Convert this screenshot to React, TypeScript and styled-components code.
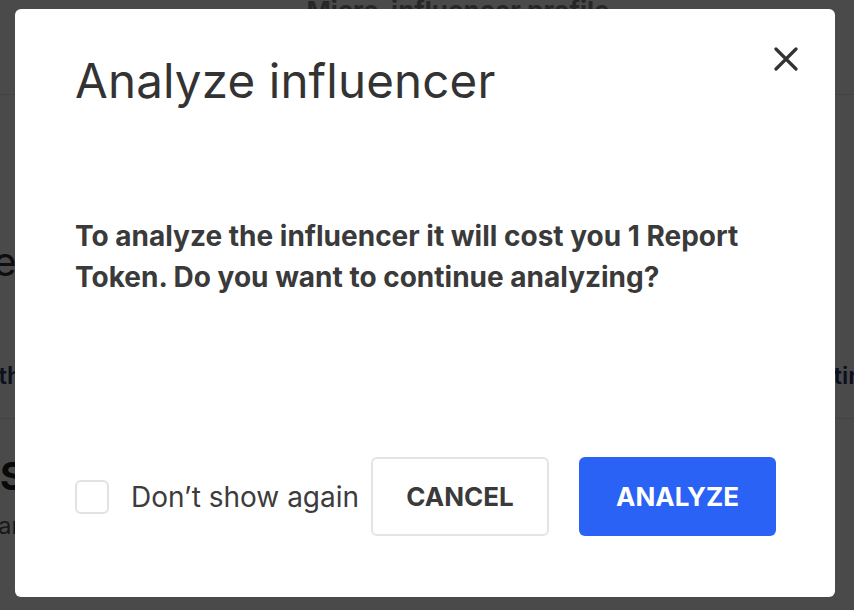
import * as React from "react";
import { useState } from "react";
import styled, { createGlobalStyle } from "styled-components";

const GlobalStyle = createGlobalStyle`
  html, body {
    margin: 0;
    padding: 0;
    height: 100%;
    overflow: hidden;
  }
  body {
    font-family: Inter, "Noto Sans", "Liberation Sans", sans-serif;
    background: #ffffff;
  }
`;

/* page that sits behind the dialog */
const Page = styled.div`
  width: 854px;
  height: 610px;
  overflow: hidden;
  background: #ffffff;
`;

const PageInner = styled.div`
  width: 1040px;
  margin-left: -162px;
  display: flex;
  flex-direction: column;
`;

const TopBar = styled.div`
  height: 100px;
  box-sizing: border-box;
  display: flex;
  justify-content: center;
  padding-left: 200px;
  border-bottom: 1px solid #e6e6e6;
  margin-top: -5px;
  font-size: 26px;
  font-weight: 700;
  color: #888;
`;

const SectionTitle = styled.h2`
  margin: 142px 0 0;
  font-size: 40px;
  font-weight: 400;
  color: #333;
`;

const Tabs = styled.div`
  display: flex;
  justify-content: space-between;
  padding: 0 0 28px 14px;
  margin-top: 75px;
  font-size: 24px;
  font-weight: 600;
  color: #2d3a70;
  border-bottom: 1px solid #e4e4e4;
`;

const BigHeading = styled.h3`
  margin: 34px 0 0;
  padding-left: 162px;
  font-size: 38px;
  font-weight: 700;
  color: #222;
`;

const SubLine = styled.p`
  margin: 12px 0 0;
  padding-left: 160px;
  font-size: 24px;
  color: #555;
`;

const Overlay = styled.div`
  position: fixed;
  inset: 0;
  background: rgba(0, 0, 0, 0.71);
  display: flex;
  align-items: flex-start;
  justify-content: flex-start;
  padding: 9px 0 0 15px;
`;

const Dialog = styled.div`
  position: relative;
  width: 820px;
  height: 588px;
  box-sizing: border-box;
  background: #ffffff;
  border-radius: 6px;
  padding: 44px 60px 61px 60px;
  display: flex;
  flex-direction: column;
`;

const Title = styled.h1`
  margin: 0;
  font-size: 47.5px;
  line-height: 56px;
  font-weight: 400;
  color: #333333;
  letter-spacing: 0.15px;
`;

const CloseButton = styled.button`
  position: absolute;
  top: 36px;
  right: 35px;
  width: 28px;
  height: 28px;
  padding: 0;
  border: none;
  background: transparent;
  display: flex;
  align-items: center;
  justify-content: center;
  cursor: pointer;
`;

const Message = styled.p`
  margin: 107px 0 0;
  font-size: 28px;
  line-height: 41px;
  font-weight: 700;
  color: #3a3a3a;
  letter-spacing: 0;
`;

const Footer = styled.div`
  margin-top: auto;
  display: flex;
  align-items: center;
`;

const CheckLabel = styled.label`
  display: flex;
  align-items: center;
  gap: 22px;
  font-size: 28px;
  color: #3c3c3c;
  white-space: nowrap;
  cursor: pointer;
  margin-right: 12px;
`;

const Box = styled.span<{ checked: boolean }>`
  flex: none;
  width: 34px;
  height: 34px;
  box-sizing: border-box;
  border: 2px solid #e2e2e2;
  border-radius: 6px;
  background: ${(p) => (p.checked ? "#2a62f6" : "#ffffff")};
`;

const Button = styled.button<{ primary?: boolean }>`
  flex: none;
  height: 79px;
  box-sizing: border-box;
  padding: 0 30px;
  border-radius: 6px;
  font-family: inherit;
  font-size: 26px;
  font-weight: 700;
  text-transform: uppercase;
  cursor: pointer;
  border: ${(p) => (p.primary ? "none" : "2px solid #e4e4e4")};
  background: ${(p) => (p.primary ? "#2a62f6" : "#ffffff")};
  color: ${(p) => (p.primary ? "#ffffff" : "#3a3a3a")};
  width: ${(p) => (p.primary ? "197px" : "178px")};
  margin-left: ${(p) => (p.primary ? "30px" : "auto")};
`;

export default function App() {
  const [dontShow, setDontShow] = useState(false);

  return (
    <>
      <GlobalStyle />
      <Page>
        <PageInner>
          <TopBar>Micro-influencer profile</TopBar>
          <SectionTitle>Audience</SectionTitle>
          <Tabs>
            <span>Overview of the audience</span>
            <span>Engagement listing</span>
          </Tabs>
          <BigHeading>Summary of the analysis</BigHeading>
          <SubLine>analysis is based on recent posts</SubLine>
        </PageInner>
      </Page>

      <Overlay>
        <Dialog>
          <CloseButton aria-label="Close">
            <svg width="24" height="24" viewBox="0 0 24 24">
              <path
                d="M2 2 L22 22 M22 2 L2 22"
                stroke="#333"
                strokeWidth="3.2"
                strokeLinecap="round"
              />
            </svg>
          </CloseButton>
          <Title>Analyze influencer</Title>
          <Message>
            To analyze the influencer it will cost you 1 Report Token. Do you
            want to continue analyzing?
          </Message>
          <Footer>
            <CheckLabel onClick={() => setDontShow((v) => !v)}>
              <Box checked={dontShow} />
              Don’t show again
            </CheckLabel>
            <Button>Cancel</Button>
            <Button primary>Analyze</Button>
          </Footer>
        </Dialog>
      </Overlay>
    </>
  );
}
